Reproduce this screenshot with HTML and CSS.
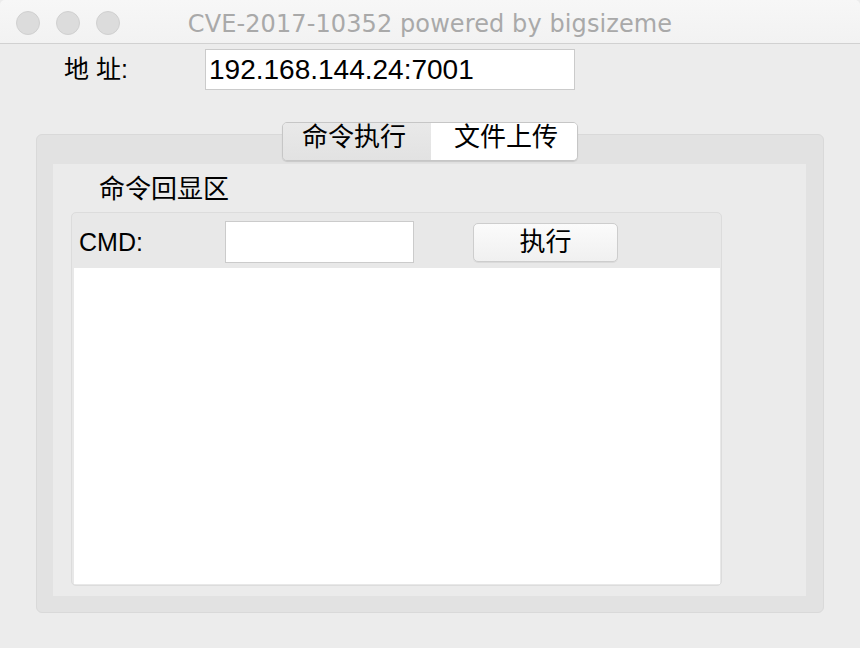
FILE: index.html
```html
<!DOCTYPE html>
<html lang="zh">
<head>
<meta charset="utf-8">
<title>CVE-2017-10352 powered by bigsizeme</title>
<link rel="stylesheet" href="styles.css">
</head>
<body>
<div class="window">
  <div class="titlebar">
    <div class="lights">
      <span class="light"></span>
      <span class="light"></span>
      <span class="light"></span>
    </div>
    <div class="title">CVE-2017-10352 powered by bigsizeme</div>
    <div></div>
  </div>
  <div class="addr-row">
    <span class="addr-label">地 址:</span>
    <input class="addr-input" type="text" value="192.168.144.24:7001">
  </div>
  <div class="tabwidget">
    <div class="tabs">
      <div class="tab tab-first">命令执行</div>
      <div class="tab tab-last">文件上传</div>
    </div>
    <div class="pane">
      <div class="page">
        <div class="echo-label">命令回显区</div>
        <div class="group">
          <div class="cmd-row">
            <span class="cmd-label">CMD:</span>
            <input class="cmd-input" type="text">
            <button class="run-btn">执行</button>
          </div>
          <div class="output"></div>
        </div>
      </div>
    </div>
  </div>
</div>
</body>
</html>
```
FILE: styles.css
```css
html, body {
  margin: 0;
  padding: 0;
  background: #ececec;
}
body {
  font-family: "Liberation Sans", "Noto Sans CJK SC", sans-serif;
  color: #000;
}
.window {
  width: 860px;
  height: 648px;
  background: #ececec;
  overflow: hidden;
}
.titlebar {
  height: 43px;
  border-bottom: 1px solid #d1d1d1;
  background: linear-gradient(#f7f7f7, #f2f2f2);
  border-radius: 5px 5px 0 0;
  display: grid;
  grid-template-columns: 1fr auto 1fr;
  align-items: center;
}
.lights {
  display: flex;
  gap: 16px;
  padding-left: 16px;
}
.light {
  width: 22px;
  height: 22px;
  border-radius: 50%;
  background: #dcdcdc;
  border: 1px solid #d0d0d0;
}
.title {
  font-family: "DejaVu Sans", sans-serif;
  font-size: 24px;
  line-height: 43px;
  padding-top: 3px;
  letter-spacing: 0.1px;
  color: #a9a9a9;
  white-space: nowrap;
}
.addr-row {
  display: flex;
  align-items: center;
  padding: 5px 0 0 64px;
  height: 41px;
}
.addr-label {
  width: 141px;
  font-size: 25px;
  line-height: 41px;
}
.addr-input {
  box-sizing: border-box;
  width: 370px;
  height: 41px;
  margin: 0;
  border: 1px solid #cbcbcb;
  background: #fff;
  padding: 0 0 0 3px;
  font-family: "Liberation Sans", sans-serif;
  font-size: 28px;
  color: #000;
  outline: none;
}
.tabwidget {
  margin: 32px 36px 0 36px;
  display: flex;
  flex-direction: column;
}
.tabs {
  position: relative;
  z-index: 1;
  align-self: center;
  display: flex;
  margin-bottom: -27px;
  border: 1px solid #c6c6c6;
  border-radius: 5px;
  overflow: hidden;
  box-shadow: 0 1px 1px rgba(0, 0, 0, 0.12);
}
.tab {
  height: 28px;
  padding-bottom: 9px;
  line-height: 28px;
  font-size: 26px;
  text-align: center;
}
.tab-first {
  width: 148px;
  padding-right: 0;
  background: linear-gradient(#e9e9e9, #e2e2e2);
  text-indent: -6px;
}
.tab-last {
  width: 146px;
  background: #fff;
  text-indent: 4px;
}
.pane {
  border: 1px solid #d9d9d9;
  border-radius: 6px;
  background: #e2e2e2;
  padding: 29px 17px 16px 16px;
}
.page {
  background: #ebebeb;
  padding: 0 0 10px 18px;
}
.echo-label {
  height: 48px;
  line-height: 50px;
  padding-left: 28px;
  font-size: 26px;
}
.group {
  box-sizing: border-box;
  width: 651px;
  border: 1px solid #dcdcdc;
  border-radius: 5px;
  background: #e8e8e8;
}
.cmd-row {
  display: flex;
  align-items: center;
  height: 52px;
  padding: 3px 0 0 7px;
}
.cmd-label {
  width: 146px;
  font-size: 25px;
  line-height: 42px;
}
.cmd-input {
  box-sizing: border-box;
  width: 189px;
  height: 42px;
  margin: 0;
  border: 1px solid #cbcbcb;
  background: #fff;
  outline: none;
}
.run-btn {
  box-sizing: border-box;
  width: 145px;
  height: 39px;
  margin: 0 0 0 59px;
  padding: 0;
  border: 1px solid #cdcdcd;
  border-radius: 5px;
  background: linear-gradient(#fbfbfb, #f0f0f0);
  box-shadow: 0 1px 0 rgba(0, 0, 0, 0.06);
  font-family: "Liberation Sans", "Noto Sans CJK SC", sans-serif;
  font-size: 26px;
  line-height: 37px;
  color: #000;
}
.output {
  height: 316px;
  margin: 0 1px 1px 2px;
  background: #fff;
}
```
